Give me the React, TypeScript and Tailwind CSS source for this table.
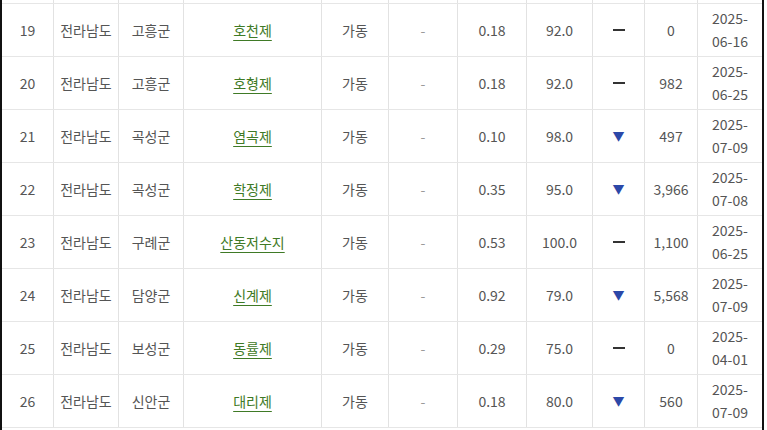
import React from "react";

type Row = {
  no: string;
  sido: string;
  gun: string;
  name: string;
  status: string;
  etc: string;
  a: string;
  b: string;
  trend: "flat" | "down";
  c: string;
  d1: string;
  d2: string;
};

const rows: Row[] = [
  { no: "19", sido: "전라남도", gun: "고흥군", name: "호천제", status: "가동", etc: "-", a: "0.18", b: "92.0", trend: "flat", c: "0", d1: "2025-", d2: "06-16" },
  { no: "20", sido: "전라남도", gun: "고흥군", name: "호형제", status: "가동", etc: "-", a: "0.18", b: "92.0", trend: "flat", c: "982", d1: "2025-", d2: "06-25" },
  { no: "21", sido: "전라남도", gun: "곡성군", name: "염곡제", status: "가동", etc: "-", a: "0.10", b: "98.0", trend: "down", c: "497", d1: "2025-", d2: "07-09" },
  { no: "22", sido: "전라남도", gun: "곡성군", name: "학정제", status: "가동", etc: "-", a: "0.35", b: "95.0", trend: "down", c: "3,966", d1: "2025-", d2: "07-08" },
  { no: "23", sido: "전라남도", gun: "구례군", name: "산동저수지", status: "가동", etc: "-", a: "0.53", b: "100.0", trend: "flat", c: "1,100", d1: "2025-", d2: "06-25" },
  { no: "24", sido: "전라남도", gun: "담양군", name: "신계제", status: "가동", etc: "-", a: "0.92", b: "79.0", trend: "down", c: "5,568", d1: "2025-", d2: "07-09" },
  { no: "25", sido: "전라남도", gun: "보성군", name: "동률제", status: "가동", etc: "-", a: "0.29", b: "75.0", trend: "flat", c: "0", d1: "2025-", d2: "04-01" },
  { no: "26", sido: "전라남도", gun: "신안군", name: "대리제", status: "가동", etc: "-", a: "0.18", b: "80.0", trend: "down", c: "560", d1: "2025-", d2: "07-09" },
];

const cellBase = "flex items-center justify-center border-r border-[#e2e2e2] text-center";

function Cells({ children, heightClass }: { children?: React.ReactNode[]; heightClass: string }) {
  const widths = [
    "w-[52px]",
    "w-[65px]",
    "w-[65px]",
    "w-[138px]",
    "w-[67px]",
    "w-[69px]",
    "w-[69px]",
    "w-[66px]",
    "w-[52px]",
    "w-[53px]",
    "w-[64px]",
  ];
  return (
    <div className={`flex ${heightClass} border-b border-[#e6e6e6]`}>
      {widths.map((w, i) => (
        <div
          key={i}
          className={`${cellBase} ${w} shrink-0 ${i === widths.length - 1 ? "border-r-0" : ""}`}
        >
          {children ? children[i] : null}
        </div>
      ))}
    </div>
  );
}

export default function App() {
  return (
    <div
      className="w-[767px] h-[430px] overflow-hidden bg-white text-[14px] leading-[22px] text-[#555555]"
      style={{ fontFamily: '"Noto Sans CJK KR", "Noto Sans", sans-serif' }}
    >
      <div className="w-[764px] border-l-2 border-r-2 border-[#111111] h-[430px]">
        <Cells heightClass="h-[4px]" />
        {rows.map((r) => (
          <Cells
            key={r.no}
            heightClass="h-[53px]"
            children={[
              <span>{r.no}</span>,
              <span>{r.sido}</span>,
              <span>{r.gun}</span>,
              <span className="text-[#3f7a26] underline decoration-[#3f7a26] underline-offset-[4px]">
                {r.name}
              </span>,
              <span>{r.status}</span>,
              <span className="text-[#9a9a9a]">{r.etc}</span>,
              <span>{r.a}</span>,
              <span>{r.b}</span>,
              r.trend === "down" ? (
                <span className="text-[#2c48a8] text-[12px]">▼</span>
              ) : (
                <span className="inline-block w-[12px] h-[2px] bg-[#333333]" />
              ),
              <span>{r.c}</span>,
              <span className="flex flex-col leading-[23px]">
                <span>{r.d1}</span>
                <span>{r.d2}</span>
              </span>,
            ]}
          />
        ))}
      </div>
    </div>
  );
}
